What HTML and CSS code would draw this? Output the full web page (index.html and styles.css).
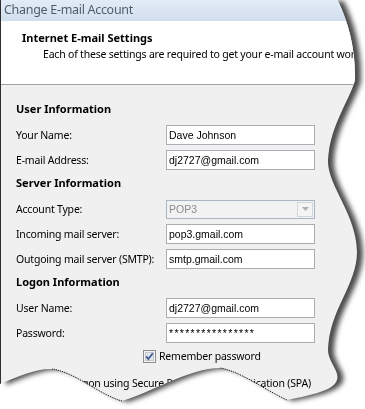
FILE: index.html
```html
<!DOCTYPE html>
<html lang="en">
<head>
    <meta charset="UTF-8">
    <title>Change E-mail Account</title>
    <link rel="stylesheet" href="styles.css">
</head>
<body>
    <!-- Dialog, cut out with a torn edge -->
    <div class="sheet">
        <div class="window">
            <div class="titlebar">Change E-mail Account</div>

            <div class="header">
                <div class="header-title">Internet E-mail Settings</div>
                <div class="header-sub">Each of these settings are required to get your e-mail account working.</div>
            </div>

            <div class="content">
                <div class="section-title">User Information</div>
                <div class="row">
                    <span class="label">Your Name:</span>
                    <input class="field" type="text" value="Dave Johnson" readonly>
                </div>
                <div class="row">
                    <span class="label">E-mail Address:</span>
                    <input class="field" type="text" value="dj2727@gmail.com" readonly>
                </div>

                <div class="section-title">Server Information</div>
                <div class="row">
                    <span class="label">Account Type:</span>
                    <div class="select">
                        <span class="select-value">POP3</span>
                        <span class="select-button">
                            <svg width="7" height="4" viewBox="0 0 7 4"><path d="M0 0H7L3.5 4Z" fill="#a9b0b8"/></svg>
                        </span>
                    </div>
                </div>
                <div class="row">
                    <span class="label">Incoming mail server:</span>
                    <input class="field" type="text" value="pop3.gmail.com" readonly>
                </div>
                <div class="row">
                    <span class="label">Outgoing mail server (SMTP):</span>
                    <input class="field" type="text" value="smtp.gmail.com" readonly>
                </div>

                <div class="section-title">Logon Information</div>
                <div class="row">
                    <span class="label">User Name:</span>
                    <input class="field" type="text" value="dj2727@gmail.com" readonly>
                </div>
                <div class="row">
                    <span class="label">Password:</span>
                    <input class="field password" type="text" value="****************" readonly>
                </div>

                <div class="check-row remember">
                    <span class="checkbox">
                        <svg width="13" height="13" viewBox="0 0 13 13">
                            <rect x="0.5" y="0.5" width="12" height="12" fill="#f4f4f4" stroke="#8e8f8f"/>
                            <rect x="2.5" y="2.5" width="8" height="8" fill="#e2e5ea" stroke="#c3c8cf"/>
                            <path d="M3.2 6.4L5.3 9L9.8 3.2" fill="none" stroke="#3d5c94" stroke-width="1.8"/>
                        </svg>
                    </span>
                    <span>Remember password</span>
                </div>
                <div class="check-row spa">
                    <span class="checkbox">
                        <svg width="13" height="13" viewBox="0 0 13 13">
                            <rect x="0.5" y="0.5" width="12" height="12" fill="#f4f4f4" stroke="#8e8f8f"/>
                        </svg>
                    </span>
                    <span>Require logon using Secure Password Authentication (SPA)</span>
                </div>
            </div>
        </div>
    </div>

    <!-- Dotted stretches of the torn edge -->
    <svg class="dots" width="365" height="409" viewBox="0 0 365 409">
        <path d="M287,400 C265,390 240,371 220,368"/>
        <path d="M122,401 C100,395 75,372 52,369"/>
    </svg>
</body>
</html>
```

FILE: styles.css
```css
body {
    margin: 0;
    width: 365px;
    height: 409px;
    overflow: hidden;
    position: relative;
    background: #FFFFFF;
    font-family: 'Noto Sans', sans-serif;
    font-size: 10.5px;
    letter-spacing: -0.2px;
    color: #000;
}

.sheet {
    filter: drop-shadow(6px 1px 2.5px rgba(0, 0, 0, 0.7));
}

.window {
    height: 409px;
    background: #F0F0F0;
    border-left: 1px solid #2E2E2E;
    white-space: nowrap;
    overflow: hidden;
    clip-path: path('M-10,-10 L332,-10 C343,8 356,40 355,80 C350,100 330,125 328,160 C327,185 357,215 357,252 C357,285 329,310 328,350 C328,362 340,371 337,380 C333,392 305,396 287,400 C265,390 240,371 220,368 C190,368 150,393 122,401 C100,395 75,372 52,369 C35,368 15,378 -10,388 Z');
}

.titlebar {
    height: 21px;
    line-height: 20px;
    padding-left: 3px;
    font-size: 12.5px;
    letter-spacing: -0.3px;
    color: #505D6C;
    background: linear-gradient(#E2EBF6, #D3DFEE);
}

.header {
    height: 64px;
    box-sizing: border-box;
    padding: 9px 0 0 21px;
    background: #FFFFFF;
    border-bottom: 1px solid #A0A0A0;
}

.header-title {
    font-weight: 700;
    font-size: 11px;
    letter-spacing: 0;
    line-height: 16px;
}

.header-sub {
    line-height: 16px;
    padding-left: 21px;
}

.content {
    padding: 12px 0 0 15px;
}

.section-title {
    font-weight: 700;
    font-size: 11px;
    letter-spacing: 0;
    line-height: 16px;
    margin: 4px 0 8px;
}

.row {
    display: grid;
    grid-template-columns: 150px 149px;
    align-items: center;
    height: 20px;
    margin-bottom: 5px;
}

.label {
    line-height: 16px;
}

.field {
    box-sizing: border-box;
    width: 149px;
    height: 20px;
    margin: 0;
    padding: 0 2px;
    border: 1px solid #ABADB3;
    background: #FFFFFF;
    font-family: 'Liberation Sans', sans-serif;
    font-size: 10.5px;
    letter-spacing: 0;
    color: #000;
    outline: none;
}

.password {
    letter-spacing: 1.3px;
}

.select {
    box-sizing: border-box;
    width: 149px;
    height: 19px;
    display: flex;
    align-items: center;
    justify-content: space-between;
    border: 1px solid #AAB4C2;
    background: #F2F2F2;
}

.select-value {
    padding-left: 2px;
    font-family: 'Liberation Sans', sans-serif;
    font-size: 10.5px;
    letter-spacing: 0;
    color: #8D8D8D;
}

.select-button {
    box-sizing: border-box;
    width: 16px;
    height: 15px;
    margin-right: 1px;
    display: flex;
    align-items: center;
    justify-content: center;
    border: 1px solid #D2D6DC;
    background: #F4F4F4;
}

.check-row {
    display: flex;
    align-items: center;
    gap: 3px;
    line-height: 16px;
}

.checkbox {
    display: flex;
    width: 13px;
    height: 13px;
}

.remember {
    margin: 1px 0 0 127px;
}

.spa {
    margin: 11px 0 0 1px;
    gap: 4px;
}

.dots {
    position: absolute;
    top: 0;
    left: 0;
    pointer-events: none;
}

.dots path {
    fill: none;
    stroke: #000;
    stroke-width: 1;
    stroke-dasharray: 1 1;
}
```
